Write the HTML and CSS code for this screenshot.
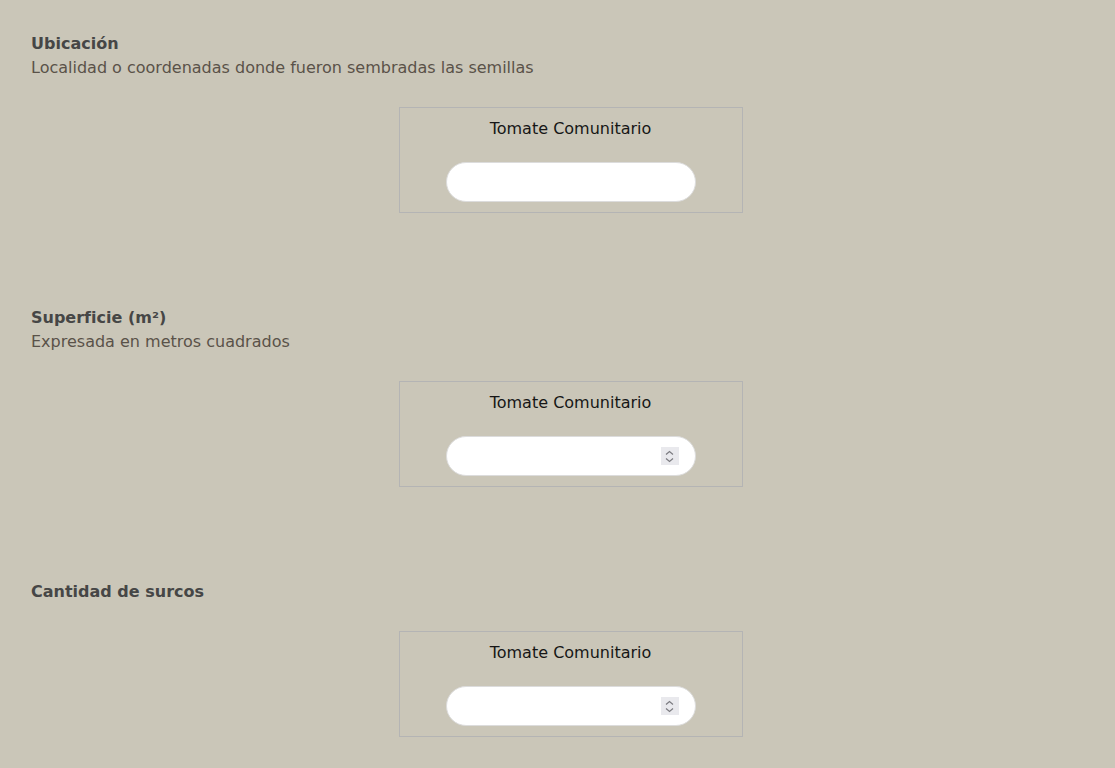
FILE: index.html
```html
<!DOCTYPE html>
<html lang="es">

<head>
  <meta charset="UTF-8">
  <meta name="viewport" content="width=device-width, initial-scale=1.0">
  <title>Registro de siembra</title>
  <link rel="stylesheet" href="styles.css">
</head>

<body>

  <div class="form">

    <div class="field">
      <div class="label">Ubicación</div>
      <div class="desc">Localidad o coordenadas donde fueron sembradas las semillas</div>
      <div class="card">
        <div class="card-title">Tomate Comunitario</div>
        <input class="pill" type="text">
      </div>
    </div>

    <div class="field">
      <div class="label">Superficie (m²)</div>
      <div class="desc">Expresada en metros cuadrados</div>
      <div class="card">
        <div class="card-title">Tomate Comunitario</div>
        <div class="num">
          <input class="pill" type="number">
          <span class="spin">
            <svg width="9" height="13" viewBox="0 0 9 13"><path d="M1 4.5 L4.5 1.5 L8 4.5 M1 8.5 L4.5 11.5 L8 8.5" fill="none" stroke="#7b7b80" stroke-width="1.2"/></svg>
          </span>
        </div>
      </div>
    </div>

    <div class="field">
      <div class="label">Cantidad de surcos</div>
      <div class="card">
        <div class="card-title">Tomate Comunitario</div>
        <div class="num">
          <input class="pill" type="number">
          <span class="spin">
            <svg width="9" height="13" viewBox="0 0 9 13"><path d="M1 4.5 L4.5 1.5 L8 4.5 M1 8.5 L4.5 11.5 L8 8.5" fill="none" stroke="#7b7b80" stroke-width="1.2"/></svg>
          </span>
        </div>
      </div>
    </div>

  </div>

</body>

</html>
```

FILE: styles.css
```css
* {
  margin: 0;
  padding: 0;
  box-sizing: border-box;
}

body {
  background-color: #cac6b8;
  font-family: "DejaVu Sans", sans-serif;
  font-size: 16px;
  line-height: 24px;
}

.form {
  padding: 32px 5px 0 31px;
}

.field {
  margin-bottom: 93px;
}

.label {
  font-weight: bold;
  color: #464646;
}

.desc {
  color: #5a5249;
}

.card {
  width: 344px;
  margin: 27px auto 0;
  border: 1px solid #b4b4b4;
  padding: 9px 0 10px;
  display: flex;
  flex-direction: column;
  align-items: center;
}

.card-title {
  color: #161616;
  margin-bottom: 21px;
}

.pill {
  display: block;
  width: 250px;
  height: 40px;
  border: 1px solid #dcdcdc;
  border-radius: 20px;
  background: #fff;
  padding: 0 18px;
  font-family: inherit;
  font-size: 16px;
  outline: none;
  -moz-appearance: textfield;
}

.pill::-webkit-inner-spin-button,
.pill::-webkit-outer-spin-button {
  -webkit-appearance: none;
  margin: 0;
}

.num {
  position: relative;
}

/* flechas del campo numerico, siempre visibles */
.spin {
  position: absolute;
  right: 17px;
  top: 11px;
  width: 18px;
  height: 18px;
  background-color: #e9e9ed;
  display: flex;
  align-items: center;
  justify-content: center;
}
```
